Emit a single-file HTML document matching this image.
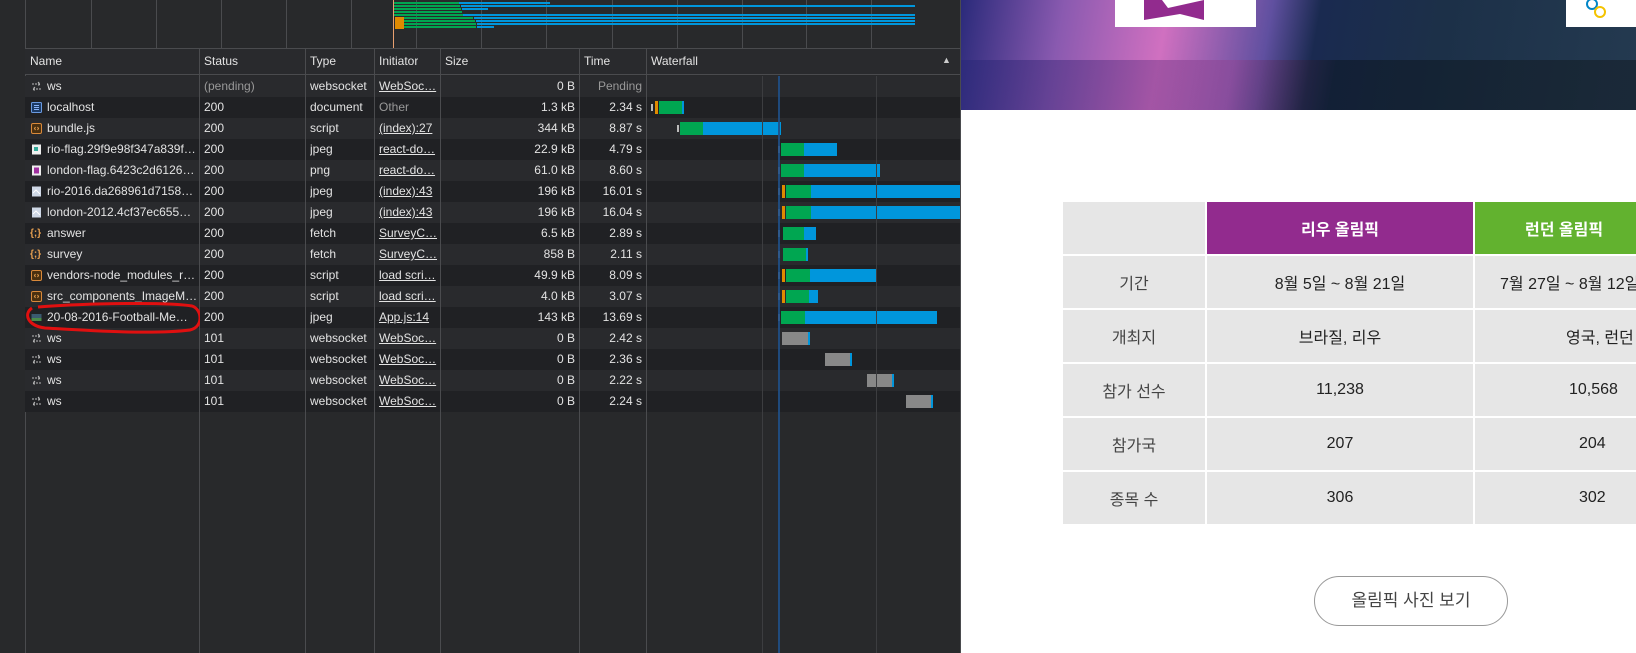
<!DOCTYPE html>
<html><head><meta charset="utf-8"><style>
*{margin:0;padding:0;box-sizing:border-box}
body{width:1636px;height:653px;overflow:hidden;background:#fff;position:relative;font-family:"Liberation Sans","Noto Sans CJK KR",sans-serif}
.dv{position:absolute;left:0;top:0;width:961px;height:653px;background:#28292b;color:#e3e3e3;font-size:12px}
.ab{position:absolute}
.row{position:absolute;left:25px;width:935px;height:21px}
.c{position:absolute;top:0;height:21px;line-height:21px;white-space:nowrap;overflow:hidden}
.u{text-decoration:underline}
.vl{position:absolute;width:1px;background:#4a4b4e}
.ico{position:absolute;left:6px;top:5px;width:11px;height:11px}
.t{position:absolute;top:0;height:13px}
.g{background:#00a651}.b{background:#0096dc}.o{background:#e08a00}.gr{background:#888}
td{background:#e6e6e6;text-align:center;font-size:16px;color:#222;height:52px}
</style></head><body>
<div class="dv">
<div class="ab" style="left:25px;top:0;width:1px;height:653px;background:#4a4b4e"></div>
<div class="vl" style="left:91px;top:0;height:48px"></div>
<div class="vl" style="left:156px;top:0;height:48px"></div>
<div class="vl" style="left:221px;top:0;height:48px"></div>
<div class="vl" style="left:286px;top:0;height:48px"></div>
<div class="vl" style="left:351px;top:0;height:48px"></div>
<div class="vl" style="left:416px;top:0;height:48px"></div>
<div class="vl" style="left:481px;top:0;height:48px"></div>
<div class="vl" style="left:546px;top:0;height:48px"></div>
<div class="vl" style="left:612px;top:0;height:48px"></div>
<div class="vl" style="left:677px;top:0;height:48px"></div>
<div class="vl" style="left:742px;top:0;height:48px"></div>
<div class="vl" style="left:806px;top:0;height:48px"></div>
<div class="vl" style="left:871px;top:0;height:48px"></div>
<div class="ab" style="left:393px;top:0;width:1px;height:48px;background:#e8a070"></div>
<div class="ab g" style="left:394px;top:2px;width:65px;height:2px"></div><div class="ab b" style="left:459px;top:2px;width:91px;height:2px"></div>
<div class="ab g" style="left:394px;top:5px;width:66px;height:2px"></div><div class="ab b" style="left:461px;top:5px;width:454px;height:2px"></div>
<div class="ab g" style="left:394px;top:8px;width:67px;height:2px"></div><div class="ab b" style="left:462px;top:8px;width:26px;height:2px"></div>
<div class="ab g" style="left:394px;top:11px;width:68px;height:2px"></div>
<div class="ab g" style="left:394px;top:14px;width:69px;height:2px"></div><div class="ab b" style="left:463px;top:14px;width:452px;height:2px"></div>
<div class="ab o" style="left:395px;top:17px;width:9px;height:12px"></div>
<div class="ab g" style="left:404px;top:17px;width:69px;height:2px"></div><div class="ab b" style="left:474px;top:17px;width:441px;height:2px"></div>
<div class="ab g" style="left:404px;top:20px;width:71px;height:2px"></div><div class="ab b" style="left:476px;top:20px;width:439px;height:2px"></div>
<div class="ab g" style="left:404px;top:23px;width:72px;height:2px"></div><div class="ab b" style="left:477px;top:23px;width:438px;height:2px"></div>
<div class="ab g" style="left:404px;top:26px;width:72px;height:2px"></div><div class="ab b" style="left:477px;top:26px;width:17px;height:2px"></div>
<div class="ab" style="left:25px;top:48px;width:935px;height:1px;background:#4a4b4e"></div>
<div class="row" style="top:49px;height:26px;background:#292a2d;border-bottom:1px solid #4a4b4e">
<div class="c" style="left:5px;height:25px;line-height:24px">Name</div>
<div class="c" style="left:179px;height:25px;line-height:24px">Status</div>
<div class="c" style="left:285px;height:25px;line-height:24px">Type</div>
<div class="c" style="left:354px;height:25px;line-height:24px">Initiator</div>
<div class="c" style="left:420px;height:25px;line-height:24px">Size</div>
<div class="c" style="left:559px;height:25px;line-height:24px">Time</div>
<div class="c" style="left:626px;height:25px;line-height:24px">Waterfall</div>
<div class="c" style="left:917px;height:25px;line-height:23px;font-size:9px;color:#ccc">▲</div>
</div>
<div id="rows"></div>
<div class="vl" style="left:199px;top:48px;height:605px"></div>
<div class="vl" style="left:305px;top:48px;height:605px"></div>
<div class="vl" style="left:374px;top:48px;height:605px"></div>
<div class="vl" style="left:440px;top:48px;height:605px"></div>
<div class="vl" style="left:579px;top:48px;height:605px"></div>
<div class="vl" style="left:646px;top:48px;height:605px"></div>
<div class="vl" style="left:762px;top:76px;height:577px;background:#3c3d40"></div>
<div class="vl" style="left:876px;top:76px;height:577px;background:#3c3d40"></div>
<div class="ab" style="left:778px;top:76px;width:2px;height:577px;background:#1f4f86;opacity:.9"></div>
<div class="ab" style="left:960px;top:0;width:1px;height:653px;background:#4a4b4e"></div>
</div>
<script>
const R=[
["ws","ws","(pending)","websocket","WebSoc…","0 B","Pending",[]],
["doc","localhost","200","document","Other","1.3 kB","2.34 s",[["gr",651,2],["o",655,3],["g",659,23],["b",682,2]]],
["js","bundle.js","200","script","(index):27","344 kB","8.87 s",[["gr",677,2],["g",680,23],["b",703,78]]],
["img","rio-flag.29f9e98f347a839f…","200","jpeg","react-do…","22.9 kB","4.79 s",[["gr",778,2],["g",781,23],["b",804,33]]],
["png","london-flag.6423c2d6126…","200","png","react-do…","61.0 kB","8.60 s",[["gr",778,2],["g",781,23],["b",804,76]]],
["img2","rio-2016.da268961d7158…","200","jpeg","(index):43","196 kB","16.01 s",[["gr",778,2],["o",782,3],["g",786,25],["b",811,149]]],
["img2","london-2012.4cf37ec655…","200","jpeg","(index):43","196 kB","16.04 s",[["gr",778,2],["o",782,3],["g",786,25],["b",811,149]]],
["f","answer","200","fetch","SurveyC…","6.5 kB","2.89 s",[["gr",778,2],["g",783,21],["b",804,12]]],
["f","survey","200","fetch","SurveyC…","858 B","2.11 s",[["gr",778,2],["g",783,23],["b",806,2]]],
["js","vendors-node_modules_r…","200","script","load scri…","49.9 kB","8.09 s",[["gr",778,2],["o",782,3],["g",786,24],["b",810,66]]],
["js","src_components_ImageM…","200","script","load scri…","4.0 kB","3.07 s",[["gr",778,2],["o",782,3],["g",786,23],["b",809,9]]],
["ph","20-08-2016-Football-Me…","200","jpeg","App.js:14","143 kB","13.69 s",[["gr",778,2],["g",781,24],["b",805,132]]],
["ws","ws","101","websocket","WebSoc…","0 B","2.42 s",[["gr",782,26],["b",808,2]]],
["ws","ws","101","websocket","WebSoc…","0 B","2.36 s",[["gr",825,25],["b",850,2]]],
["ws","ws","101","websocket","WebSoc…","0 B","2.22 s",[["gr",867,25],["b",892,2]]],
["ws","ws","101","websocket","WebSoc…","0 B","2.24 s",[["gr",906,25],["b",931,2]]]];
const I={
ws:'<svg class="ico" viewBox="0 0 11 11"><path d="M1 3h8M7 1l2 2-2 2M10 8H2M4 6L2 8l2 2" stroke="#bbb" fill="none" stroke-dasharray="2 1"/></svg>',
doc:'<svg class="ico" viewBox="0 0 11 11"><rect x=".5" y=".5" width="10" height="10" rx="1" fill="#1c3b66" stroke="#6a9ae0"/><path d="M3 3.5h5M3 5.5h5M3 7.5h5" stroke="#8ab4f8"/></svg>',
js:'<svg class="ico" viewBox="0 0 11 11"><rect x=".5" y=".5" width="10" height="10" rx="1.5" fill="#4a3010" stroke="#d9893a"/><path d="M4.5 4l-1 1.5 1 1.5M6.5 4l1 1.5-1 1.5" stroke="#e8a050" fill="none"/></svg>',
img:'<svg class="ico" viewBox="0 0 11 11"><rect x="1" y="0.5" width="9" height="10" fill="#eee"/><rect x="3" y="3" width="4" height="4" fill="#3a9"/></svg>',
png:'<svg class="ico" viewBox="0 0 11 11"><rect x="1" y="0.5" width="9" height="10" fill="#eee"/><rect x="3" y="2.5" width="5" height="6" fill="#a030a0"/></svg>',
img2:'<svg class="ico" viewBox="0 0 11 11"><rect x="1" y="0.5" width="9" height="10" fill="#cfd8e6"/><path d="M2 7l3-3 4 4" stroke="#fff" fill="none"/></svg>',
f:'<span class="ico" style="font-size:10px;line-height:11px;color:#e8a050;font-weight:bold;left:5px">{;}</span>',
ph:'<svg class="ico" viewBox="0 0 11 11"><rect x="0.5" y="2" width="10" height="7" fill="#3a5a70"/><rect x="0.5" y="6" width="10" height="3" fill="#4a8a4a"/></svg>'};
let h='';R.forEach((r,i)=>{const y=76+i*21;const bg=i%2?'#202124':'#292a2d';
let bars=r[7].map(b=>`<div class="t ${b[0]}" style="left:${b[1]-25}px;width:${b[2]}px;top:4px;${b[0]=='gr'&&b[2]<4?'height:7px;top:7px;background:#bbb':''}"></div>`).join('');
const oth=r[4]=='Other';
h+=`<div class="row" style="top:${y}px;background:${bg}">${I[r[0]]}
<div class="c" style="left:22px;width:150px">${r[1]}</div>
<div class="c" style="left:179px;${r[2]=='(pending)'?'color:#999':''}">${r[2]}</div>
<div class="c" style="left:285px">${r[3]}</div>
<div class="c ${oth?'':'u'}" style="left:354px;width:62px;${oth?'color:#999':''}">${r[4]}</div>
<div class="c" style="left:415px;width:135px;text-align:right">${r[5]}</div>
<div class="c" style="left:555px;width:62px;text-align:right;${r[6]=='Pending'?'color:#999':''}">${r[6]}</div>
${bars}</div>`});
document.getElementById('rows').innerHTML=h;
</script>
<div class="ab" style="left:961px;top:0;width:675px;height:110px;background:linear-gradient(100deg,#2a2a7a 0%,#8a5ab0 15%,#d070c0 30%,#6050a0 45%,#1a2a50 52%,#1c3048 70%,#243a50 100%)"></div>
<div class="ab" style="left:961px;top:60px;width:675px;height:50px;background:linear-gradient(100deg,rgba(40,40,120,.6),rgba(150,60,140,.4) 40%,rgba(10,20,30,.5) 55%,rgba(20,30,40,.6))"></div>
<div class="ab" style="left:1115px;top:0;width:141px;height:27px;background:#fff"></div>
<div class="ab" style="left:1144px;top:0;width:60px;height:20px;background:#922b8e;clip-path:polygon(0 0,30% 0,40% 40%,100% 0,100% 100%,60% 70%,0 100%)"></div>
<div class="ab" style="left:1566px;top:0;width:70px;height:27px;background:#fff"></div>
<div class="ab" style="left:1586px;top:-2px;width:12px;height:12px;border:2px solid #0085c7;border-radius:50%"></div>
<div class="ab" style="left:1594px;top:6px;width:12px;height:12px;border:2px solid #f4c300;border-radius:50%"></div>
<table class="ab" style="left:1061px;top:200px;border-collapse:separate;border-spacing:2px;width:620px">
<tr><td style="width:142px"></td><td style="width:266px;background:#922b8e;color:#fff;font-weight:bold">리우 올림픽</td><td style="background:#62b22f;color:#fff;font-weight:bold;text-align:left;padding-left:50px">런던 올림픽</td></tr>
<tr><td style="color:#444">기간</td><td>8월 5일 ~ 8월 21일</td><td style="text-align:left;padding-left:25px">7월 27일 ~ 8월 12일</td></tr>
<tr><td style="color:#444">개최지</td><td>브라질, 리우</td><td style="text-align:left;padding-left:91px">영국, 런던</td></tr>
<tr><td style="color:#444">참가 선수</td><td>11,238</td><td style="text-align:left;padding-left:94px">10,568</td></tr>
<tr><td style="color:#444">참가국</td><td>207</td><td style="text-align:left;padding-left:104px">204</td></tr>
<tr><td style="color:#444">종목 수</td><td>306</td><td style="text-align:left;padding-left:104px">302</td></tr>
</table>
<div class="ab" style="left:1314px;top:576px;width:194px;height:50px;border:1px solid #999;border-radius:25px;text-align:center;line-height:48px;font-size:17px;color:#444">올림픽 사진 보기</div>
<svg class="ab" style="left:20px;top:300px" width="180" height="40"><path d="M18 7 C70 3,150 2,172 6 C182 9,184 27,170 30 C130 35,60 30,25 28 C8 26,3 14,12 8" stroke="#e01010" stroke-width="3" fill="none"/></svg>
</body></html>
